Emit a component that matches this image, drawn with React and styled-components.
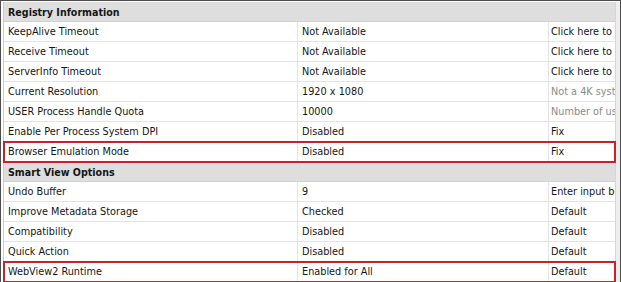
import React from 'react';
import styled, {createGlobalStyle} from 'styled-components'

const GlobalStyle = createGlobalStyle`
    html, body {
        margin: 0;
        padding: 0;
        background: #ffffff;
    }
`

const Frame = styled.div`
    width: 621px;
    height: 282px;
    box-sizing: border-box;
    border: 1px solid #4d4d4d;
    border-bottom: none;
    padding: 1px 0 0 2px;
    display: flex;
    overflow: hidden;
    font-family: "DejaVu Sans Condensed", "DejaVu Sans", sans-serif;
    font-size: 10.8px;
    color: #161616;
`

const Grid = styled.div`
    width: 612px;
    box-sizing: border-box;
    border-left: 1px solid #c9c9c9;
    display: flex;
    flex-direction: column;
`

const Gutter = styled.div`
    flex: 1;
    background: #ededed;
    border-left: 1px solid #d6d6d6;
`

const Section = styled.div`
    height: 20px;
    box-sizing: border-box;
    background: #dedede;
    font-weight: bold;
    font-size: 10.6px;
    padding-left: 4px;
    display: flex;
    align-items: center;
    border-bottom: 1px solid #d2d2d2;
`

const Row = styled.div`
    position: relative;
    height: 20px;
    box-sizing: border-box;
    display: grid;
    grid-template-columns: 294px 251px 1fr;
    border-bottom: 1px solid #e4e4e4;
    background: #ffffff;
    outline: ${p => p.$marked ? '2px solid #c9222c' : 'none'};
    outline-offset: -1px;
    z-index: ${p => p.$marked ? 1 : 0};
`

const Cell = styled.div`
    display: flex;
    align-items: center;
    padding-left: ${p => p.$last ? '2px' : '4px'};
    white-space: nowrap;
    overflow: hidden;
    border-right: ${p => p.$last ? 'none' : '1px solid #e4e4e4'};
    color: ${p => p.$muted ? '#8a8a8a' : 'inherit'};
`

const registry = [
    ['KeepAlive Timeout', 'Not Available', 'Click here to'],
    ['Receive Timeout', 'Not Available', 'Click here to'],
    ['ServerInfo Timeout', 'Not Available', 'Click here to'],
    ['Current Resolution', '1920 x 1080', 'Not a 4K system', true],
    ['USER Process Handle Quota', '10000', 'Number of user objects', true],
    ['Enable Per Process System DPI', 'Disabled', 'Fix'],
    ['Browser Emulation Mode', 'Disabled', 'Fix', false, true],
]

const smartView = [
    ['Undo Buffer', '9', 'Enter input between'],
    ['Improve Metadata Storage', 'Checked', 'Default'],
    ['Compatibility', 'Disabled', 'Default'],
    ['Quick Action', 'Disabled', 'Default'],
    ['WebView2 Runtime', 'Enabled for All', 'Default', false, true],
]

function OptionRow({item}) {
    const [name, value, action, muted, marked] = item
    return (
        <Row $marked={marked}>
            <Cell>{name}</Cell>
            <Cell>{value}</Cell>
            <Cell $last $muted={muted}>{action}</Cell>
        </Row>
    )
}

function App() {
    return (
        <>
            <GlobalStyle/>
            <Frame>
                <Grid>
                    <Section>Registry Information</Section>
                    {registry.map(item => <OptionRow key={item[0]} item={item}/>)}
                    <Section>Smart View Options</Section>
                    {smartView.map(item => <OptionRow key={item[0]} item={item}/>)}
                </Grid>
                <Gutter/>
            </Frame>
        </>
    );
}

export default App;
